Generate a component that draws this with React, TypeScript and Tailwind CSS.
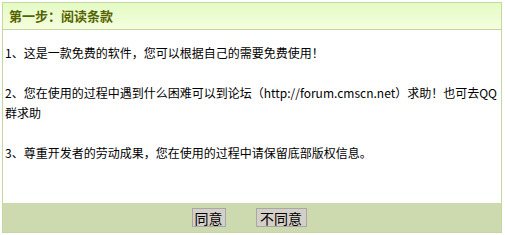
import React from 'react';

const terms = [
  '1、这是一款免费的软件，您可以根据自己的需要免费使用！',
  '2、您在使用的过程中遇到什么困难可以到论坛（http://forum.cmscn.net）求助！也可去QQ群求助',
  '3、尊重开发者的劳动成果，您在使用的过程中请保留底部版权信息。',
];

const App: React.FC = () => {
  return (
    <div className="w-[505px] h-[235px] bg-white pt-[2px] pl-[2px]" style={{ fontFamily: '"Noto Sans CJK SC", sans-serif' }}>
      <div className="w-[500px] border border-[#c5d6a0]">
        {/* header */}
        <div className="h-[27px] bg-gradient-to-b from-[#e3fbc4] to-[#f5fedd] border-b border-[#c5d6a0] flex items-center pl-[6px]">
          <span className="text-[13px] font-bold text-[#556200]">第一步：阅读条款</span>
        </div>

        {/* body */}
        <div className="h-[173px] px-[2px] pt-[13px] text-[12px] leading-[20px] text-black">
          {terms.map((t, i) => (
            <p key={i} className="mb-[20px]">{t}</p>
          ))}
        </div>

        {/* footer */}
        <div className="h-[29px] bg-[#cdd9ae] flex items-center justify-center gap-[30px] pr-[6px]">
          <button className="h-[19px] w-[34px] bg-[#d4d0c8] border border-[#a8a8a8] text-[14px] leading-none text-black">同意</button>
          <button className="h-[19px] w-[51px] bg-[#d4d0c8] border border-[#a8a8a8] text-[14px] leading-none text-black">不同意</button>
        </div>
      </div>
    </div>
  );
};

export default App;
